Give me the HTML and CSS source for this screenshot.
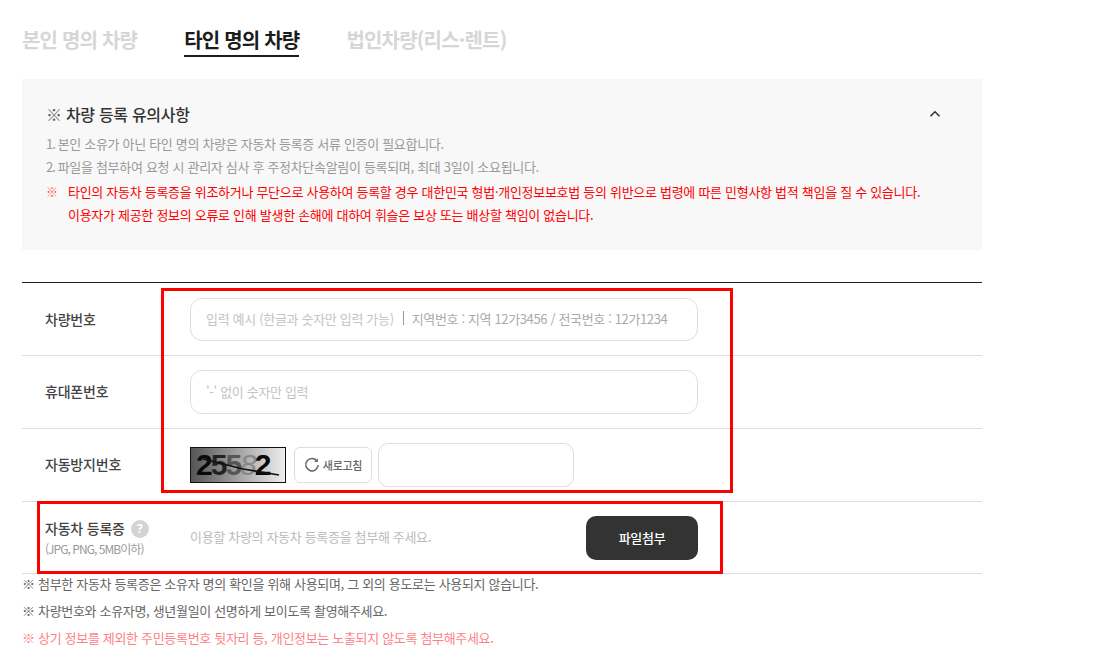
FILE: index.html
```html
<!DOCTYPE html>
<html lang="ko">
<head>
<meta charset="utf-8">
<title>차량 등록</title>
<link rel="stylesheet" href="styles.css">
</head>
<body>
<div class="page">
  <nav class="tabs">
    <a class="tab">본인 명의 차량</a>
    <a class="tab active">타인 명의 차량</a>
    <a class="tab">법인차량(리스·렌트)</a>
  </nav>
  <section class="notice">
    <div class="notice-head">
      <h2 class="notice-title"><span class="mark">※</span> 차량 등록 유의사항</h2>
      <svg class="chev" width="12" height="8" viewBox="0 0 12 8"><path d="M1.5 6.2 6 1.8l4.500 4.400" fill="none" stroke="#333" stroke-width="1.600"/></svg>
    </div>
    <p class="notice-line"><span class="num">1.</span> 본인 소유가 아닌 타인 명의 차량은 자동차 등록증 서류 인증이 필요합니다.</p>
    <p class="notice-line"><span class="num">2.</span> 파일을 첨부하여 요청 시 관리자 심사 후 주정차단속알림이 등록되며, 최대 3일이 소요됩니다.</p>
    <div class="warn">
      <span class="warn-mark">※</span>
      <div>
        <p class="warn-line">타인의 자동차 등록증을 위조하거나 무단으로 사용하여 등록할 경우 대한민국 형법·개인정보보호법 등의 위반으로 법령에 따른 민형사항 법적 책임을 질 수 있습니다.</p>
        <p class="warn-line">이용자가 제공한 정보의 오류로 인해 발생한 손해에 대하여 휘슬은 보상 또는 배상할 책임이 없습니다.</p>
      </div>
    </div>
  </section>
  <form class="form">
    <div class="row">
      <label class="label first">차량번호</label>
      <div class="field input short"><span>입력 예시 (한글과 숫자만 입력 가능)</span><i class="sep"></i><span class="hint">지역번호 : 지역 12가3456 / 전국번호 : 12가1234</span></div>
    </div>
    <div class="row">
      <label class="label">휴대폰번호</label>
      <div class="field input"><span>'-' 없이 숫자만 입력</span></div>
    </div>
    <div class="row">
      <label class="label">자동방지번호</label>
      <div class="field captcha-row">
        <div class="captcha">
          <span class="cd">2</span><span class="cd c2">5</span><span class="cd c3">5</span><span class="cd c4">8</span><span class="cd c5">2</span>
          <svg class="strike" width="94" height="34" viewBox="0 0 94 34"><path d="M12 11 52 21 88 27" fill="none" stroke="#111" stroke-width="1.600"/></svg>
        </div>
        <button type="button" class="refresh">
          <svg width="16" height="16" viewBox="0 0 16 16"><path d="M13.200 4.300A6.200 6.200 0 1 0 14.200 8" fill="none" stroke="#666" stroke-width="1.500"/><path d="M13.800 1.300v3.600h-3.600z" fill="#666"/></svg>
          <span>새로고침</span>
        </button>
        <div class="code"></div>
      </div>
    </div>
    <div class="row last">
      <div class="label-stack">
        <div class="label lic">자동차 등록증 <b class="q">?</b></div>
        <div class="sub">(JPG, PNG, 5MB이하)</div>
      </div>
      <div class="field upload">
        <span class="up-text">이용할 차량의 자동차 등록증을 첨부해 주세요.</span>
        <button type="button" class="attach">파일첨부</button>
      </div>
    </div>
    <div class="mark-a"></div>
    <div class="mark-b"></div>
  </form>
  <ul class="notes">
    <li>※ 첨부한 자동차 등록증은 소유자 명의 확인을 위해 사용되며, 그 외의 용도로는 사용되지 않습니다.</li>
    <li>※ 차량번호와 소유자명, 생년월일이 선명하게 보이도록 촬영해주세요.</li>
    <li class="pink">※ 상기 정보를 제외한 주민등록번호 뒷자리 등, 개인정보는 노출되지 않도록 첨부해주세요.</li>
  </ul>
</div>
</body>
</html>
```
FILE: styles.css
```css
* { box-sizing: border-box; }
html, body { margin: 0; padding: 0; height: 658px; overflow: hidden; background: #fff; }
body { font-family: "Noto Sans CJK KR", "Noto Sans", sans-serif; color: #333; }
p, h2, ul { margin: 0; padding: 0; }
.page { width: 982px; padding-left: 22px; }

.tabs { display: flex; gap: 47px; height: 79px; padding-top: 25px; align-items: flex-start; }
.tab { font-size: 20px; font-weight: 700; letter-spacing: -0.8px; line-height: 29px; height: 32px; color: #d6d6d6; }
.tab.active { color: #1c1c1c; border-bottom: 2px solid #1c1c1c; }

.notice { height: 171px; background: #f8f8f8; padding: 21px 24px 0; }
.notice-head { display: flex; justify-content: space-between; align-items: center; height: 28px; margin-bottom: 4px; padding-right: 17px; }
.notice-title { font-size: 16px; font-weight: 500; color: #333; letter-spacing: -0.3px; }
.mark { font-weight: 400; color: #666; }
.chev { margin-top: -1px; }
.notice-line { font-size: 13px; line-height: 23px; color: #999; letter-spacing: -0.31px; }
.num { letter-spacing: -1px; margin-right: -0.5px; }
.warn { display: flex; gap: 10px; margin-top: 2px; color: #f00; }
.warn-mark { font-size: 12px; line-height: 23px; width: 12px; color: #f55; }
.warn-line { font-size: 13px; line-height: 23px; letter-spacing: -0.29px; font-weight: 400; }

.form { position: relative; margin-top: 32px; border-top: 1px solid #222; width: 960px; }
.row { display: flex; align-items: center; height: 73px; border-bottom: 1px solid #ddd; }
.row.last { height: 72px; }
.label { width: 168px; padding: 0 0 2px 23px; font-size: 14px; font-weight: 500; color: #444; letter-spacing: -0.2px; }
.label.first { padding-bottom: 0; }
.field { width: 508px; }
.input { display: flex; align-items: center; height: 44px; border: 1px solid #ddd; border-radius: 12px; padding: 0 15px 2px; font-size: 13px; color: #c4c4c4; letter-spacing: -0.32px; background: #fff; }
.input.short { height: 43px; }
.sep { width: 1px; height: 14px; background: #999; margin: 0 8px 0 9px; }
.hint { color: #aaa; letter-spacing: -0.36px; }

.captcha-row { display: flex; align-items: center; }
.captcha { position: relative; display: flex; width: 96px; height: 36px; padding-left: 5px; border: 1px solid #111; background: linear-gradient(90deg, #555, #eee); font-family: "Liberation Sans", sans-serif; overflow: hidden; }
.cd { font-size: 30px; line-height: 33px; font-weight: 700; color: #0a0a0a; margin-right: -2px; }
.c2 { color: #222; }
.c3 { color: #555; }
.c4 { color: #888; font-weight: 400; font-style: italic; }
.c5 { color: #0a0a0a; }
.strike { position: absolute; left: 0; top: 0; }
.refresh { display: flex; align-items: center; justify-content: center; gap: 3px; width: 78px; height: 36px; margin-left: 8px; padding: 0; background: #fff; border: 1px solid #ddd; border-radius: 6px; font: inherit; font-size: 11px; font-weight: 500; color: #666; letter-spacing: -0.3px; }
.code { width: 196px; height: 44px; margin-left: 6px; border: 1px solid #ddd; border-radius: 10px; }

.label-stack { width: 168px; }
.lic { width: auto; display: flex; align-items: center; gap: 6px; line-height: 20px; padding-bottom: 0; margin-top: 1px; }
.q { display: inline-flex; align-items: center; justify-content: center; width: 18px; height: 18px; margin-top: 2px; border-radius: 50%; background: #d4d4d4; color: #fff; font-size: 12px; font-weight: 700; font-family: "Noto Sans", sans-serif; }
.sub { padding-left: 23px; font-size: 12px; line-height: 18px; margin-top: 2px; color: #999; letter-spacing: -0.95px; }
.upload { display: flex; align-items: center; justify-content: space-between; font-size: 13px; }
.up-text { color: #bbb; letter-spacing: -0.32px; padding-bottom: 2px; }
.attach { width: 112px; height: 44px; border: 0; border-radius: 10px; background: #333; color: #fff; font: inherit; font-size: 13px; font-weight: 500; letter-spacing: -0.3px; }

.mark-a { position: absolute; left: 139px; top: 5px; width: 572px; height: 205px; border: 3px solid #f00; pointer-events: none; }
.mark-b { position: absolute; left: 15px; top: 218px; width: 686px; height: 73px; border: 3px solid #f00; pointer-events: none; }

.notes { list-style: none; }
.notes li { font-size: 13px; line-height: 20px; margin-bottom: 7px; color: #666; letter-spacing: -0.32px; }
.notes .pink { color: #ff7f86; }
```
